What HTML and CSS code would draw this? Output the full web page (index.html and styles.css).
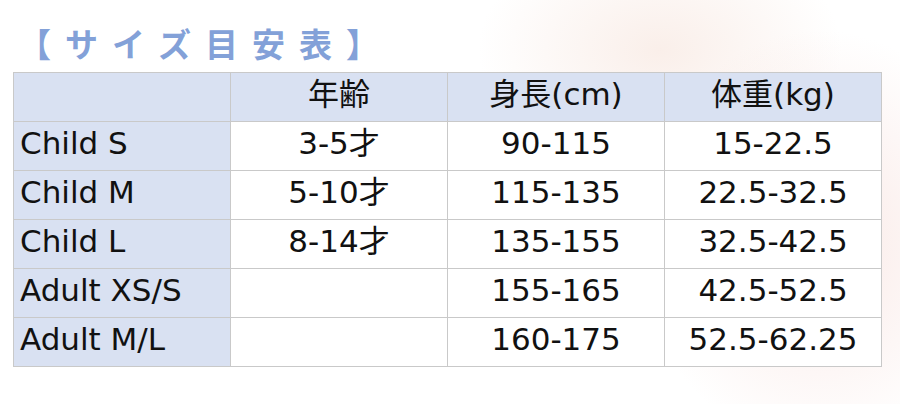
FILE: index.html
```html
<!DOCTYPE html>
<html lang="ja">
<head>
<meta charset="utf-8">
<link rel="stylesheet" href="styles.css">
</head>
<body>
<div class="page">
  <h1 class="title">【サイズ目安表】</h1>
  <table class="size-table">
    <colgroup><col><col><col><col></colgroup>
    <thead>
      <tr><th class="label"></th><th>年齢</th><th>身長(cm)</th><th>体重(kg)</th></tr>
    </thead>
    <tbody>
      <tr><td class="label">Child S</td><td>3-5才</td><td>90-115</td><td>15-22.5</td></tr>
      <tr><td class="label">Child M</td><td>5-10才</td><td>115-135</td><td>22.5-32.5</td></tr>
      <tr><td class="label">Child L</td><td>8-14才</td><td>135-155</td><td>32.5-42.5</td></tr>
      <tr><td class="label">Adult XS/S</td><td></td><td>155-165</td><td>42.5-52.5</td></tr>
      <tr><td class="label">Adult M/L</td><td></td><td>160-175</td><td>52.5-62.25</td></tr>
    </tbody>
  </table>
</div>
</body>
</html>
```

FILE: styles.css
```css
html, body {
  margin: 0;
  padding: 0;
}
body {
  width: 900px;
  height: 404px;
  overflow: hidden;
  background:
    radial-gradient(ellipse 260px 300px at 820px 240px, rgba(245, 215, 210, 0.55), rgba(255,255,255,0) 70%),
    radial-gradient(ellipse 260px 170px at 660px 50px, rgba(247, 230, 222, 0.65), rgba(255,255,255,0) 70%),
    #ffffff;
  font-family: "DejaVu Sans", "Noto Sans CJK JP", sans-serif;
  color: #111;
}
.page {
  padding: 24px 0 0 13px;
}
.title {
  margin: 0 0 10px 5px;
  font-family: "Noto Sans CJK JP", sans-serif;
  font-weight: 700;
  font-size: 33px;
  line-height: 38px;
  letter-spacing: 14px;
  color: #83a1d8;
}
.size-table {
  border-collapse: collapse;
  table-layout: fixed;
  width: 868px;
  background: #ffffff;
}
.size-table col {
  width: 217px;
}
.size-table th,
.size-table td {
  border: 1px solid #c9c9c9;
  height: 49px;
  box-sizing: border-box;
  padding: 0 0 5px 0;
  font-size: 31px;
  font-weight: 400;
  text-align: center;
  vertical-align: middle;
  line-height: 31px;
}
.size-table thead th {
  background: #d9e1f2;
}
.size-table td.label,
.size-table th.label {
  background: #d9e1f2;
  text-align: left;
  padding-left: 6px;
}
```
